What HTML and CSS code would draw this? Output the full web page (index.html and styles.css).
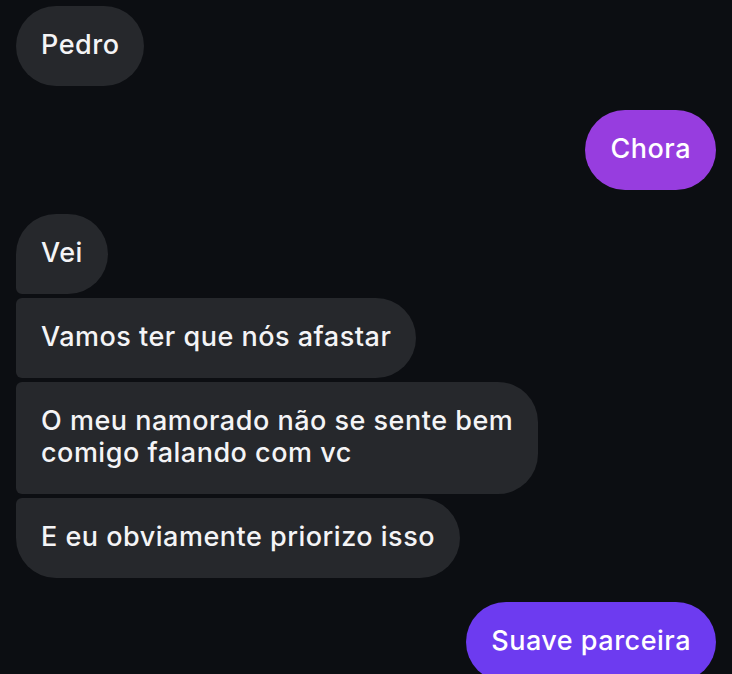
FILE: index.html
```html
<html>
<head>
   <meta charset="UTF-8">
   <title>Chat</title>
   <link rel="stylesheet" href="styles.css">
</head>
<body>
	<div class="thread">
		<div class="row them">
			<div class="msg">Pedro</div>
		</div>

		<div class="row me">
			<div class="msg sent violet">Chora</div>
		</div>

		<div class="group them">
			<div class="msg first">Vei</div>
			<div class="msg mid">Vamos ter que nós afastar</div>
			<div class="msg mid">O meu namorado não se sente bem<br>comigo falando com vc</div>
			<div class="msg last">E eu obviamente priorizo isso</div>
		</div>

		<div class="row me">
			<div class="msg sent indigo">Suave parceira</div>
		</div>
	</div>
</body>
</html>
```

FILE: styles.css
```css
body{
	margin: 0;
	background: #0c0e12;
	font-family: Inter, "Noto Sans", sans-serif;
	overflow: hidden;
}
.thread{
	display: flex;
	flex-direction: column;
	gap: 24px;
	padding: 6px 16px 0 16px;
}
.row{
	display: flex;
}
.row.me{
	justify-content: flex-end;
}
.group{
	display: flex;
	flex-direction: column;
	align-items: flex-start;
	gap: 4px;
}
.msg{
	background: #26282c;
	color: #f4f4f6;
	font-size: 27px;
	font-weight: 500;
	line-height: 32px;
	letter-spacing: 0.5px;
	padding: 23px 25px 25px 25px;
	border-radius: 40px;
}
.group .first{
	border-bottom-left-radius: 6px;
}
.group .mid{
	border-top-left-radius: 6px;
	border-bottom-left-radius: 6px;
}
.group .last{
	border-top-left-radius: 6px;
}
.sent{
	color: #ffffff;
}
.violet{
	background: #973ddf;
}
.indigo{
	background: #6d3bf0;
}
```
